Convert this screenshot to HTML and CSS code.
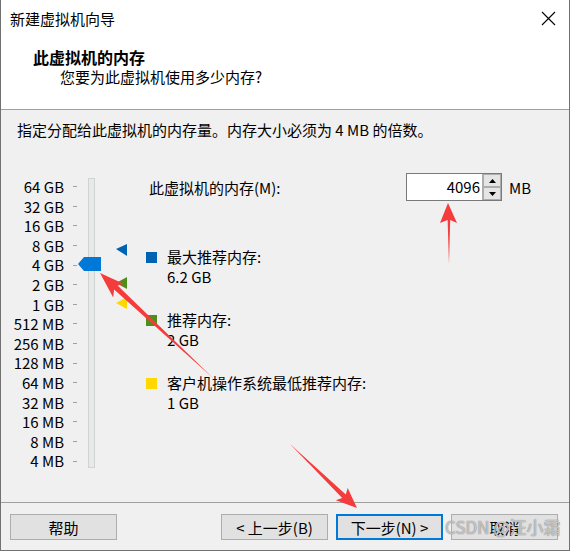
FILE: index.html
```html
<!DOCTYPE html>
<html lang="zh-CN">
<head>
    <meta charset="UTF-8">
    <title>新建虚拟机向导</title>
    <link rel="stylesheet" href="styles.css">
</head>
<body>
    <div class="dialog">
        <div class="titlebar">
            <span class="title">新建虚拟机向导</span>
            <svg class="close" width="15" height="15" viewBox="0 0 15 15">
                <path d="M1 1 L14 14 M14 1 L1 14" stroke="#000" stroke-width="1.1" fill="none"/>
            </svg>
        </div>

        <div class="header">
            <div class="header-title">此虚拟机的内存</div>
            <div class="header-sub">您要为此虚拟机使用多少内存?</div>
        </div>

        <div class="content">
            <p class="intro">指定分配给此虚拟机的内存量。内存大小必须为 4 MB 的倍数。</p>

            <div class="main">
                <div class="scale">
                    <div class="scale-row"><span class="scale-label">64 GB</span><span class="tick"></span></div>
                    <div class="scale-row"><span class="scale-label">32 GB</span><span class="tick"></span></div>
                    <div class="scale-row"><span class="scale-label">16 GB</span><span class="tick"></span></div>
                    <div class="scale-row"><span class="scale-label">8 GB</span><span class="tick"></span></div>
                    <div class="scale-row"><span class="scale-label">4 GB</span><span class="tick"></span></div>
                    <div class="scale-row"><span class="scale-label">2 GB</span><span class="tick"></span></div>
                    <div class="scale-row"><span class="scale-label">1 GB</span><span class="tick"></span></div>
                    <div class="scale-row"><span class="scale-label">512 MB</span><span class="tick"></span></div>
                    <div class="scale-row"><span class="scale-label">256 MB</span><span class="tick"></span></div>
                    <div class="scale-row"><span class="scale-label">128 MB</span><span class="tick"></span></div>
                    <div class="scale-row"><span class="scale-label">64 MB</span><span class="tick"></span></div>
                    <div class="scale-row"><span class="scale-label">32 MB</span><span class="tick"></span></div>
                    <div class="scale-row"><span class="scale-label">16 MB</span><span class="tick"></span></div>
                    <div class="scale-row"><span class="scale-label">8 MB</span><span class="tick"></span></div>
                    <div class="scale-row"><span class="scale-label">4 MB</span><span class="tick"></span></div>
                </div>

                <!-- slider: track, thumb at 4 GB, markers for max / recommended / minimum -->
                <svg class="slider" width="52" height="300" viewBox="0 0 52 300">
                    <rect x="10.5" y="8.5" width="6" height="289" fill="#e7eaea" stroke="#d2d2d2"/>
                    <path d="M0 94 L6 87 L23 87 L23 101 L6 101 Z" fill="#0078d7"/>
                    <path d="M38 79 L49 74 L49 86 Z" fill="#0063b1"/>
                    <path d="M38 113 L49 107 L49 119 Z" fill="#4e8f1a"/>
                    <path d="M38 133 L49 127 L49 139 Z" fill="#ffd800"/>
                </svg>

                <div class="details">
                    <div class="mem-row">
                        <span class="mem-label">此虚拟机的内存(M):</span>
                        <div class="spin">
                            <span class="spin-value">4096</span>
                            <div class="spin-buttons">
                                <span class="spin-btn"><svg width="7" height="4" viewBox="0 0 7 4"><path d="M0 4 L3.5 0 L7 4 Z" fill="#000"/></svg></span>
                                <span class="spin-btn"><svg width="7" height="4" viewBox="0 0 7 4"><path d="M0 0 L7 0 L3.5 4 Z" fill="#000"/></svg></span>
                            </div>
                        </div>
                        <span class="unit">MB</span>
                    </div>

                    <div class="legend">
                        <span class="swatch swatch-max"></span>
                        <div class="legend-text">
                            <div>最大推荐内存:</div>
                            <div>6.2 GB</div>
                        </div>
                    </div>
                    <div class="legend">
                        <span class="swatch swatch-rec"></span>
                        <div class="legend-text">
                            <div>推荐内存:</div>
                            <div>2 GB</div>
                        </div>
                    </div>
                    <div class="legend">
                        <span class="swatch swatch-min"></span>
                        <div class="legend-text">
                            <div>客户机操作系统最低推荐内存:</div>
                            <div>1 GB</div>
                        </div>
                    </div>
                </div>
            </div>
        </div>

        <div class="footer">
            <button class="btn">帮助</button>
            <button class="btn btn-back">&lt; 上一步(B)</button>
            <button class="btn btn-default">下一步(N) &gt;</button>
            <button class="btn">取消</button>
        </div>

        <!-- red annotation arrows drawn over the screenshot -->
        <svg class="annotations" width="570" height="551" viewBox="0 0 570 551">
            <path d="M448 203 L457 223 L450.2 220 L449 264 L447.6 220 L440 223 Z" fill="#f53c3c"/>
            <path d="M100 273 L124.1 283.9 L117.6 285.6 L213 378 L114.1 289.4 L113.2 297.5 Z" fill="#f53c3c"/>
            <path d="M357 508 L335.9 500.2 L342.2 497.9 L290 444 L345.8 494.5 L347.7 488.1 Z" fill="#f53c3c"/>
        </svg>
        <div class="watermark">CSDN @汪小霜</div>
    </div>
</body>
</html>
```

FILE: styles.css
```css
body {
    margin: 0;
    background: #fff;
}

.dialog {
    position: relative;
    width: 570px;
    height: 551px;
    box-sizing: border-box;
    border: 1px solid #717171;
    border-top: none;
    background: #fff;
    font-family: "Noto Sans CJK SC", "Noto Sans", sans-serif;
    font-size: 15px;
    color: #000;
    display: flex;
    flex-direction: column;
}

.titlebar {
    height: 36px;
    display: flex;
    align-items: center;
    justify-content: space-between;
    padding: 0 13px 0 9px;
}

.close {
    display: block;
}

.header {
    height: 73px;
    border-bottom: 1px solid #a0a0a0;
    padding-left: 32px;
}

.header-title {
    margin-top: 11px;
    line-height: 20px;
    font-size: 16px;
    font-weight: bold;
}

.header-sub {
    line-height: 20px;
    padding-left: 27px;
}

.content {
    flex: 1;
    background: #f0f0f0;
    border-bottom: 1px solid #a0a0a0;
}

.intro {
    margin: 10px 0 0 16px;
    line-height: 20px;
}

.main {
    display: flex;
    align-items: flex-start;
    margin-top: 10px;
}

.scale {
    margin-top: 27px;
}

.scale-row {
    display: flex;
    align-items: center;
    height: 19.6px;
}

.scale-label {
    width: 63px;
    text-align: right;
    line-height: 19.6px;
}

.tick {
    width: 4px;
    height: 1px;
    margin-left: 9px;
    background: #a0a0a0;
}

.slider {
    display: block;
    margin-top: 20px;
    margin-left: 1px;
}

.details {
    margin-left: 16px;
}

.mem-row {
    display: flex;
    align-items: center;
    height: 28px;
    margin-top: 23px;
}

.mem-label {
    width: 257px;
    padding-left: 3px;
}

.spin {
    display: flex;
    height: 28px;
    box-sizing: border-box;
    border: 1px solid #7a7a7a;
    background: #fff;
}

.spin-value {
    width: 73px;
    text-align: right;
    line-height: 26px;
    padding-right: 2px;
}

.spin-buttons {
    display: flex;
    flex-direction: column;
    border-left: 1px solid #adadad;
}

.spin-btn {
    width: 18px;
    height: 13px;
    box-sizing: border-box;
    border: 1px solid #adadad;
    background: #e5e5e5;
    display: flex;
    align-items: center;
    justify-content: center;
}

.unit {
    margin-left: 7px;
}

.legend {
    display: flex;
    align-items: flex-start;
    margin-top: 23px;
}

.mem-row + .legend {
    margin-top: 46px;
}

.swatch {
    width: 11px;
    height: 11px;
    margin-top: 5px;
    margin-right: 10px;
}

.swatch-max {
    background: #0063b1;
}

.swatch-rec {
    background: #4e8f1a;
}

.swatch-min {
    background: #ffd800;
}

.legend-text {
    line-height: 20px;
}

.footer {
    height: 47px;
    display: flex;
    align-items: flex-start;
    padding: 11px 11px 0 9px;
    box-sizing: border-box;
    background: #f0f0f0;
}

.btn {
    width: 107px;
    height: 26px;
    box-sizing: border-box;
    border: 1px solid #adadad;
    background: #e1e1e1;
    font-family: inherit;
    font-size: 15px;
    color: #000;
    padding: 0;
}

.btn-back {
    margin-left: auto;
}

.btn-default {
    margin-left: 8px;
    margin-right: 8px;
    border: 2px solid #0078d7;
}

.annotations {
    position: absolute;
    left: -1px;
    top: 0;
    pointer-events: none;
}

.watermark {
    position: absolute;
    left: 444px;
    top: 514px;
    font-size: 17px;
    color: rgba(255, 255, 255, 0.5);
    text-shadow: 0 0 1px #888, 0 0 1px #888;
}
```
